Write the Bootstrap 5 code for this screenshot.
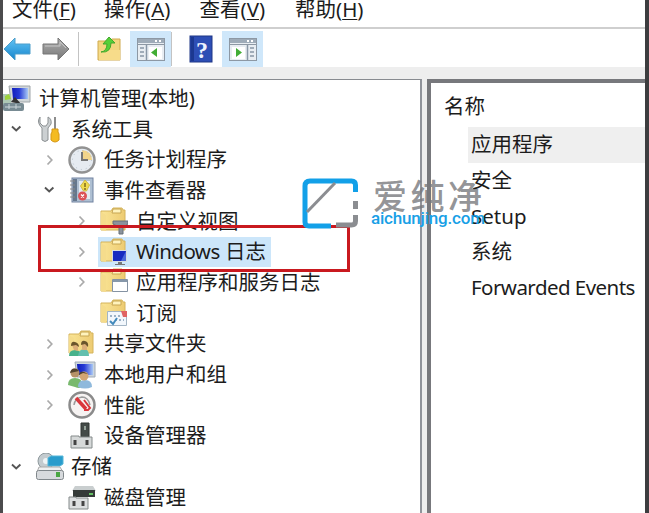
<!DOCTYPE html>
<html lang="zh-CN">
<head>
<meta charset="utf-8">
<meta name="viewport" content="width=device-width, initial-scale=1">
<title>计算机管理</title>
<link href="https://cdn.jsdelivr.net/npm/bootstrap@5.3.0/dist/css/bootstrap.min.css" rel="stylesheet">
<style>
body{font:20.5px/30px "Noto Sans","Noto Sans CJK SC",sans-serif;color:#1c1c1c;background:#fff}
.win{width:649px;height:513px;border-left:3px solid #4b4b4d;border-right:4px solid #3d3d3f;background:#eee}
.menus{height:29px;border-bottom:2px solid #cfcfcf;padding-left:9px;background:#fff;line-height:19px}
.menus span{width:95.5px}
.menus span:first-child{width:92px}
.menus u{text-decoration-thickness:1px;text-underline-offset:2px}
.tools{height:38px;background:#fff;padding-top:2px}
.tools svg{display:block}
.vline{width:1px;height:34px;background:#c3c3c3}
.toggled{width:41px;height:36px;background:#cfe7fa}
.panes{height:434px;margin-top:12px}
.tree{width:419px;border-top:1px solid #888b90;border-right:2px solid #90939a;background:#fff;padding-top:3px}
.node{height:30.7px;white-space:nowrap}
.node span{margin-top:-1px}
.arrow{width:26px;height:12px;margin-right:9px}
.l2 .arrow,.l3 .arrow{margin-right:6px}
.ico{width:28px;height:28px;margin-right:8px;flex-shrink:0}
.l1{padding-left:0}.l2{padding-left:33px}.l3{padding-left:65px}
.picked{background:#cce6fa;height:30px;padding-right:5px;margin-left:-2px;padding-left:2px}
.snug{letter-spacing:-.55px}
.list{margin-left:5px;border-left:4px solid #77787c;border-top:4px solid #77787c;background:#fff;padding:5px 0 0 37px}
.item{height:35.8px;line-height:34px;padding-left:3px;white-space:nowrap}
.item.on{background:#efefef}
.head{height:39px;line-height:36px;margin-left:-24px}
.frame{left:38px;top:225px;width:312px;height:47px;border:3px solid #c9191f}
.wm{left:298px;top:172px}
</style>
</head>
<body class="overflow-hidden">
<svg width="0" height="0" class="position-absolute">
<defs>
<linearGradient id="bl" x2="0" y2="1"><stop stop-color="#63c4f5"/><stop offset="1" stop-color="#1685cc"/></linearGradient>
<linearGradient id="gy" x2="0" y2="1"><stop stop-color="#b0b0b0"/><stop offset="1" stop-color="#777"/></linearGradient>
<linearGradient id="yl"><stop stop-color="#fae596"/><stop offset="1" stop-color="#edcb72"/></linearGradient>
<linearGradient id="sc"><stop stop-color="#101dbb"/><stop offset=".45" stop-color="#263ad5"/><stop offset="1" stop-color="#a9c9f5"/></linearGradient>
<symbol id="dn" viewBox="0 0 26 12"><path d="M9 3.500l4.200 4 4.200-4" fill="none" stroke="#555" stroke-width="1.900"/></symbol>
<symbol id="rt" viewBox="0 0 26 12"><path d="M11.500 1.500l4.300 4.500-4.300 4.500" fill="none" stroke="#aaa" stroke-width="1.700"/></symbol>
<symbol id="fold" viewBox="0 0 28 28"><path d="M1 4h10l2-3h9l1 2h2v20H1z" fill="url(#yl)" stroke="#d5b45d"/><path d="M13 2h8v4h-9z" fill="#fff3bd" stroke="#c7a653"/><path d="M1 23l5 1V8L1 5z" fill="#f5dc8c"/></symbol>
</defs>
</svg>
<div class="win">
  <nav class="menus d-flex">
    <span>文件(<u>F</u>)</span><span>操作(<u>A</u>)</span><span>查看(<u>V</u>)</span><span>帮助(<u>H</u>)</span>
  </nav>
  <div class="tools d-flex align-items-center">
    <svg width="28" height="26"><path d="M1 13L12 2v6h15v10H12v6z" fill="url(#bl)" stroke="#4d9dca"/></svg>
    <svg width="28" height="26" style="margin-left:11px"><path d="M27 13L16 2v6H1v10h15v6z" fill="url(#gy)" stroke="#777"/><path d="M3 10h15V6l6 6" fill="none" stroke="#c6c6c6"/></svg>
    <div class="vline" style="margin-left:8px"></div>
    <svg width="26" height="28" style="margin-left:18px"><path d="M1 6h11l3-2h8v21H1z" fill="#f3d680" stroke="#d0aa4f"/><path d="M2 15h21v10H2z" fill="#f7dc8a"/><path d="M4 17q6-1 6-8H6l6-7 6 6h-4q0 10-10 9z" fill="#55cf38" stroke="#43a82c"/></svg>
    <div class="toggled d-flex align-items-center justify-content-center" style="margin-left:7px">
      <svg width="28" height="26"><rect x=".5" y="2.500" width="27" height="22" fill="#e8edf2" stroke="#8d98a4"/><path d="M1 3h26v4H1z" fill="#9eabb8"/><path d="M18 5h2m2 0h2" stroke="#fff" stroke-width="2"/><path d="M1 8.500h26" stroke="#8d98a4"/><path d="M9.500 9v15M3 12h4m-4 4h4m-4 4h4" stroke="#8897a6" stroke-width="1.500"/><path d="M12 11h13v12H12z" fill="#fff"/><path d="M14 16.500l6-4.500v9z" fill="#41ad35"/></svg>
    </div>
    <div class="vline"></div>
    <svg width="24" height="30" style="margin-left:17px"><rect x="1" y="2" width="22" height="26" fill="#2d4eb5" stroke="#1e3686"/><path d="M2 3h3v24H2z" fill="#1c3890"/><text x="7" y="24" font-family="Liberation Serif" font-weight="bold" font-size="24" fill="#eef3ff">?</text></svg>
    <div class="toggled d-flex align-items-center justify-content-center" style="margin-left:9px">
      <svg width="28" height="26"><rect x=".5" y="2.500" width="27" height="22" fill="#e8edf2" stroke="#8d98a4"/><path d="M1 3h26v4H1z" fill="#9eabb8"/><path d="M18 5h2m2 0h2" stroke="#fff" stroke-width="2"/><path d="M1 8.500h26" stroke="#8d98a4"/><path d="M18.500 9v15M21 12h4m-4 4h4m-4 4h4" stroke="#8897a6" stroke-width="1.500"/><path d="M3 11h13v12H3z" fill="#fff"/><path d="M13 16.500L7 12v9z" fill="#41ad35"/></svg>
    </div>
  </div>
  <div class="panes d-flex">
    <div class="tree overflow-hidden">
      <div class="node d-flex align-items-center">
        <svg class="ico" viewBox="0 0 28 28"><path d="M6 2h21v16H8z" fill="#d2d7d9" stroke="#a0a6a9"/><path d="M9 4h16v11H10z" fill="url(#sc)"/><path d="M0 10h8v10H0z" fill="#adc7b4"/><path d="M2 12l4-2 2 5-6 1z" fill="#9ed33c"/><path d="M8 18l4-5 6 7z" fill="#333"/><rect x="0" y="19" width="21" height="8" rx="2" fill="#788b93"/><path d="M2 23h16M6 20v5m7-5v5" stroke="#ccd6da"/></svg>
        <span>计算机管理(本地)</span></div>
      <div class="node l1 d-flex align-items-center"><svg class="arrow"><use href="#dn"/></svg>
        <svg class="ico" style="width:25px" viewBox="0 0 25 28"><path d="M2 2v6l3 3h3l2-3V2q4 2 3 7l-3 4v12q-3 3-6 0V13Q-2 7 2 2z" fill="#ccd0d2" stroke="#8c9193"/><path d="M17 2v12" stroke="#8c8c8c" stroke-width="2"/><path d="M14 14h6v3l1 2v6q-4 4-8 0v-6l1-2z" fill="#f4bb22" stroke="#d69817"/></svg>
        <span>系统工具</span></div>
      <div class="node l2 d-flex align-items-center"><svg class="arrow"><use href="#rt"/></svg>
        <svg class="ico" viewBox="0 0 28 28"><circle cx="14" cy="14" r="12.500" fill="#e6ebf1" stroke="#929292" stroke-width="2.500"/><path d="M14 14V4q10 1 10 10z" fill="#f2d58b"/><path d="M14 6v8h6" fill="none" stroke="#777" stroke-width="2"/><circle cx="14" cy="14" r="9.500" fill="none" stroke="#b4bfc9" stroke-dasharray="1 4"/></svg>
        <span>任务计划程序</span></div>
      <div class="node l2 d-flex align-items-center"><svg class="arrow"><use href="#dn"/></svg>
        <svg class="ico" viewBox="0 0 28 28"><rect x="4" y="2" width="21" height="24" fill="#aebfd2" stroke="#7182a0"/><path d="M5 3h4v22H5z" fill="#66788d"/><path d="M2 5h5M2 9h5M2 13h5M2 17h5M2 21h5" stroke="#888"/><path d="M11 5h11v18H11z" fill="#e3ebf2"/><path d="M17 4l4.500 5-3 6h-3l-3-5z" fill="#f0dc4e" stroke="#cfb945"/><path d="M17 7v4m0 1v2" stroke="#80691c" stroke-width="1.500"/><circle cx="14.500" cy="20" r="4.500" fill="#dc5258"/><path d="M13 18.500l3 3m0-3l-3 3" stroke="#fff" stroke-width="1.300"/></svg>
        <span>事件查看器</span></div>
      <div class="node l3 d-flex align-items-center"><svg class="arrow"><use href="#rt"/></svg>
        <svg class="ico" viewBox="0 0 28 28"><use href="#fold" width="28" height="28"/><path d="M13 14h15v3l-5 3v7h-4v-7l-6-3z" fill="#8b939c" stroke="#66707a"/></svg>
        <span>自定义视图</span></div>
      <div class="node l3 d-flex align-items-center"><svg class="arrow"><use href="#rt"/></svg>
        <div class="picked d-flex align-items-center"><svg class="ico" viewBox="0 0 28 28"><use href="#fold" width="28" height="28"/><path d="M12 12h15v12H12z" fill="#d6dce1"/><path d="M13 13h13v10H13z" fill="#172ac0"/><path d="M21 23h5V13z" fill="#4b68d9"/><path d="M18 24h4v2h3v1H15v-1h3z" fill="#777"/></svg>
        <span><span class="snug">Windows</span> 日志</span></div></div>
      <div class="node l3 d-flex align-items-center"><svg class="arrow"><use href="#rt"/></svg>
        <svg class="ico" viewBox="0 0 28 28"><use href="#fold" width="28" height="28"/><path d="M12.500 11.500h15v12h-15z" fill="#fff" stroke="#8593a3"/><path d="M13 13h14" stroke="#8798aa" stroke-width="2"/></svg>
        <span>应用程序和服务日志</span></div>
      <div class="node l3 d-flex align-items-center"><svg class="arrow"></svg>
        <svg class="ico" viewBox="0 0 28 28"><use href="#fold" width="28" height="28"/><path d="M7.500 12.500h19v14h-19z" fill="#f2f7fc" stroke="#a3b5c5"/><path d="M10 17h12M15 21h9" stroke="#9db2c7" stroke-width="2" stroke-dasharray="2 2"/><path d="M10 22l3 3 4-6" fill="none" stroke="#438abc" stroke-width="2"/><path d="M21 12h6v6h-4z" fill="#e06464"/></svg>
        <span>订阅</span></div>
      <div class="node l2 d-flex align-items-center"><svg class="arrow"><use href="#rt"/></svg>
        <svg class="ico" viewBox="0 0 28 28"><use href="#fold" width="28" height="28"/><path d="M1 26q0-6 6-6t7 6z" fill="#48b28b"/><path d="M10 26q1-7 6-7t5 7z" fill="#62bfae"/><path d="M4 15h6v6l-4-1zM14 14h5v6h-5z" fill="#dcae79"/><path d="M3 16q0-5 4-4t4 5l-3-2zM13 15q0-5 4-4t3 6l-3-3z" fill="#6b552c"/></svg>
        <span>共享文件夹</span></div>
      <div class="node l2 d-flex align-items-center"><svg class="arrow"><use href="#rt"/></svg>
        <svg class="ico" viewBox="0 0 28 28"><path d="M7 1h20v15H9z" fill="#cbd5df" stroke="#a2abb5"/><path d="M9 3h16v11H10z" fill="url(#sc)"/><path d="M0 24q0-7 7-7t7 6-7 3z" fill="#79b96e"/><path d="M10 26q0-7 7-7t7 7q-7 3-14 0z" fill="#8fb9dc"/><circle cx="7" cy="12" r="4.500" fill="#b69268"/><circle cx="16" cy="15" r="4.500" fill="#d2a574"/><path d="M2 12q1-6 7-4l2 2zM11 14q1-6 9-1l-5-1z" fill="#51422d"/></svg>
        <span>本地用户和组</span></div>
      <div class="node l2 d-flex align-items-center"><svg class="arrow"><use href="#rt"/></svg>
        <svg class="ico" viewBox="0 0 28 28"><circle cx="14" cy="14" r="12.500" fill="#f6f3f2" stroke="#8b8b8b" stroke-width="2.500"/><path d="M6 14q1-7 8-8 6 0 8 8" fill="none" stroke="#9b9b9b" stroke-width="1.500"/><path d="M8 7l10 11" fill="none" stroke="#d9363c" stroke-width="3.500"/><path d="M16 9l6 8-2 2h-4" fill="none" stroke="#d9363c" stroke-width="2"/></svg>
        <span>性能</span></div>
      <div class="node l2 d-flex align-items-center"><svg class="arrow"></svg>
        <svg class="ico" viewBox="0 0 28 28"><path d="M13 1h8v14h-8z" fill="#444b48" stroke="#303633"/><path d="M17 4v4" stroke="#94a198" stroke-width="2"/><path d="M3 14h8v1h13v11H3z" fill="#d6d9d9" stroke="#858b8b"/><path d="M7 18v5m12-5v5" stroke="#444" stroke-width="3"/></svg>
        <span>设备管理器</span></div>
      <div class="node l1 d-flex align-items-center"><svg class="arrow" style="margin-right:7px"><use href="#dn"/></svg>
        <svg class="ico" style="margin-right:7px" viewBox="0 0 28 28"><circle cx="10" cy="8" r="8" fill="#c3cbcf" stroke="#8f999d"/><circle cx="10" cy="8" r="3" fill="#eef4f6"/><path d="M12 5l3-2h12v8l-3 2H12z" fill="#299ccc" stroke="#55b6d8"/><path d="M3 14h21l3 5H1z" fill="#eef0f1" stroke="#aaa"/><rect x=".5" y="17.500" width="27" height="9" rx="2" fill="#d7dadd" stroke="#80878b"/><path d="M20 19h4v5h-4z" fill="#49a642"/></svg>
        <span>存储</span></div>
      <div class="node l2 d-flex align-items-center"><svg class="arrow"></svg>
        <svg class="ico" viewBox="0 0 28 28"><path d="M7 3h18l3 5H4z" fill="#c9cecf"/><path d="M5 7h22v7H5z" fill="#353b39"/><path d="M21 11h4" stroke="#65c264" stroke-width="2"/><path d="M1 14h7v1h12v11H1z" fill="#dcdfe0" stroke="#858b8b"/><path d="M6 18v5m9-5v5" stroke="#444" stroke-width="3"/></svg>
        <span>磁盘管理</span></div>
    </div>
    <div class="list flex-grow-1">
      <div class="head">名称</div>
      <div class="item on">应用程序</div>
      <div class="item">安全</div>
      <div class="item">Setup</div>
      <div class="item">系统</div>
      <div class="item snug">Forwarded Events</div>
    </div>
  </div>
</div>
<div class="frame position-absolute"></div>
<svg class="wm position-absolute" width="192" height="60">
  <path d="M57.500 20V13q0-4-4-4H12q-5 0-5 5v36q0 4 4 4h22" fill="none" stroke="#12a0e8" stroke-width="5"/>
  <path d="M57.500 29v8m0 6v6q0 4-4 4H38" fill="none" stroke="#8b8d91" stroke-width="5"/>
  <path d="M9 40L37 11" stroke="#8b8d91" stroke-width="3"/>
  <text x="75" y="37" font-family="Noto Sans CJK SC" font-weight="500" font-size="34" letter-spacing="3.500" fill="#77787c" fill-opacity=".8">爱纯净</text>
  <text x="73" y="52" font-family="Roboto,sans-serif" font-weight="500" font-size="17" textLength="114" fill="#18a0e6">aichunjing.com</text>
</svg>
<script src="https://cdn.jsdelivr.net/npm/bootstrap@5.3.0/dist/js/bootstrap.bundle.min.js"></script>
</body>
</html>
